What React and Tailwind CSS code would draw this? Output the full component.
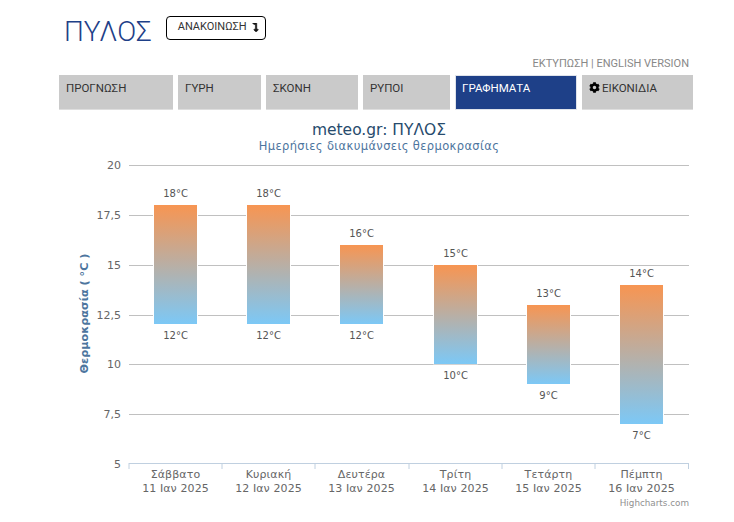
import React from "react";
import { FaCog, FaLevelDownAlt } from "react-icons/fa";

const tabs = [
  ["ΠΡΟΓΝΩΣΗ", "w-[114px]"],
  ["ΓΥΡΗ", "w-[83px]"],
  ["ΣΚΟΝΗ", "w-[92px]"],
  ["ΡΥΠΟΙ", "w-[87px]"],
  ["ΓΡΑΦΗΜΑΤΑ", "w-[122px]", true],
  ["ΕΙΚΟΝΙΔΙΑ", "w-[111px]", false, true],
];

const y = (v) => 165 + (20 - v) * 19.93;
const bars = [
  [154, 18, 12, "Σάββατο", "11 Ιαν 2025"],
  [247, 18, 12, "Κυριακή", "12 Ιαν 2025"],
  [340, 16, 12, "Δευτέρα", "13 Ιαν 2025"],
  [434, 15, 10, "Τρίτη", "14 Ιαν 2025"],
  [527, 13, 9, "Τετάρτη", "15 Ιαν 2025"],
  [620, 14, 7, "Πέμπτη", "16 Ιαν 2025"],
];
const grid = [
  [20, "20", 165], [17.5, "17,5", 215], [15, "15", 265], [12.5, "12,5", 315], [10, "10", 364], [7.5, "7,5", 414],
];
const ticks = [129, 222, 315, 409, 502, 595, 688.5];
const font = "'DejaVu Sans', sans-serif";

function Chart() {
  return (
    <svg width="734" height="397" viewBox="0 115 734 397" className="block" style={{ fontFamily: font }}>
      <defs>
        <linearGradient id="g" x1="0" y1="0" x2="0" y2="1">
          <stop offset="0" stopColor="#f79552" />
          <stop offset="1" stopColor="#7cc8f6" />
        </linearGradient>
      </defs>
      <text x="379" y="135" textAnchor="middle" fontSize="15.5" fill="#274b6d">meteo.gr: ΠΥΛΟΣ</text>
      <text x="379" y="150" textAnchor="middle" fontSize="11.5" fill="#4d759e" letterSpacing="0.37">Ημερήσιες διακυμάνσεις θερμοκρασίας</text>
      {grid.map(([v, l, r]) => (
        <g key={l}>
          <line x1="129" x2="689" y1={r + 0.5} y2={r + 0.5} stroke="#c0c0c0" />
          <text x="121" y={r + 4} textAnchor="end" fontSize="11" fill="#666">{l}</text>
        </g>
      ))}
      <text x="121" y="468" textAnchor="end" fontSize="11" fill="#666">5</text>
      <text transform="translate(87.5 313.5) rotate(-90)" textAnchor="middle" fontSize="11.2" fontWeight="bold" fill="#4d759e">Θερμοκρασία ( °C )</text>
      <line x1="129" x2="689" y1="463.5" y2="463.5" stroke="#c0d0e0" />
      {ticks.map((t) => (
        <line key={t} x1={t} x2={t} y1="463" y2="469" stroke="#c0d0e0" />
      ))}
      {bars.map(([x, hi, lo, d, date]) => (
        <g key={d}>
          <rect x={x - 1} y={y(hi)} width="45" height={y(lo) - y(hi)} fill="#fff" />
          <rect x={x} y={Math.round(y(hi))} width="43" height={Math.round(y(lo)) - Math.round(y(hi))} fill="url(#g)" />
          <text x={x + 21.5} y={y(hi) - 8} textAnchor="middle" fontSize="10" fill="#555">{hi}°C</text>
          <text x={x + 21.5} y={y(lo) + 15} textAnchor="middle" fontSize="10" fill="#555">{lo}°C</text>
          <text x={x + 21.5} y="478" textAnchor="middle" fontSize="11" fill="#666" letterSpacing="0.1">{d}</text>
          <text x={x + 21.5} y="492" textAnchor="middle" fontSize="11" fill="#666" letterSpacing="0.1">{date}</text>
        </g>
      ))}
      <text x="689" y="506" textAnchor="end" fontSize="8.8" fill="#909090">Highcharts.com</text>
    </svg>
  );
}

export default function App() {
  return (
    <div className="w-[734px] h-[522px] bg-white overflow-hidden font-['Roboto',sans-serif]">
      <div className="pl-[64px] pt-[15px] h-[57px] flex items-start">
        <h1 className="text-[28px] leading-[34px] font-light text-[#1e4088]">ΠΥΛΟΣ</h1>
        <div className="ml-[14px] mt-[1px] w-[100px] h-[24px] border border-black rounded-[4px] flex items-center gap-[4px] pl-[11px] text-[11px] text-[#333] pb-[1px]">
          ΑΝΑΚΟΙΝΩΣΗ <FaLevelDownAlt className="text-[9px] text-[#111] stroke-[30px]" />
        </div>
      </div>
      <div className="h-[18px] pr-[45px] text-right text-[11px] leading-[14px] text-[#888]">ΕΚΤΥΠΩΣΗ | ENGLISH VERSION</div>
      <div className="ml-[59px] flex gap-[5px]">
        {tabs.map(([t, w, active, icon]) => (
          <div
            key={t}
            className={`${w} h-[35px] text-[11.5px] leading-[16px] flex items-start ${active ? "bg-[#1e4088] text-white border border-[#dfe3ea] pl-[6px] pt-[4px]" : "bg-[#cacaca] text-[#333] border-b border-[#dedede] pl-[7px] pt-[5px]"}`}
          >
            {icon && <FaCog className="text-[11px] text-black mr-[2px] mt-[2px]" />}
            {t}
          </div>
        ))}
      </div>
      <div className="mt-[5px]"><Chart /></div>
    </div>
  );
}
